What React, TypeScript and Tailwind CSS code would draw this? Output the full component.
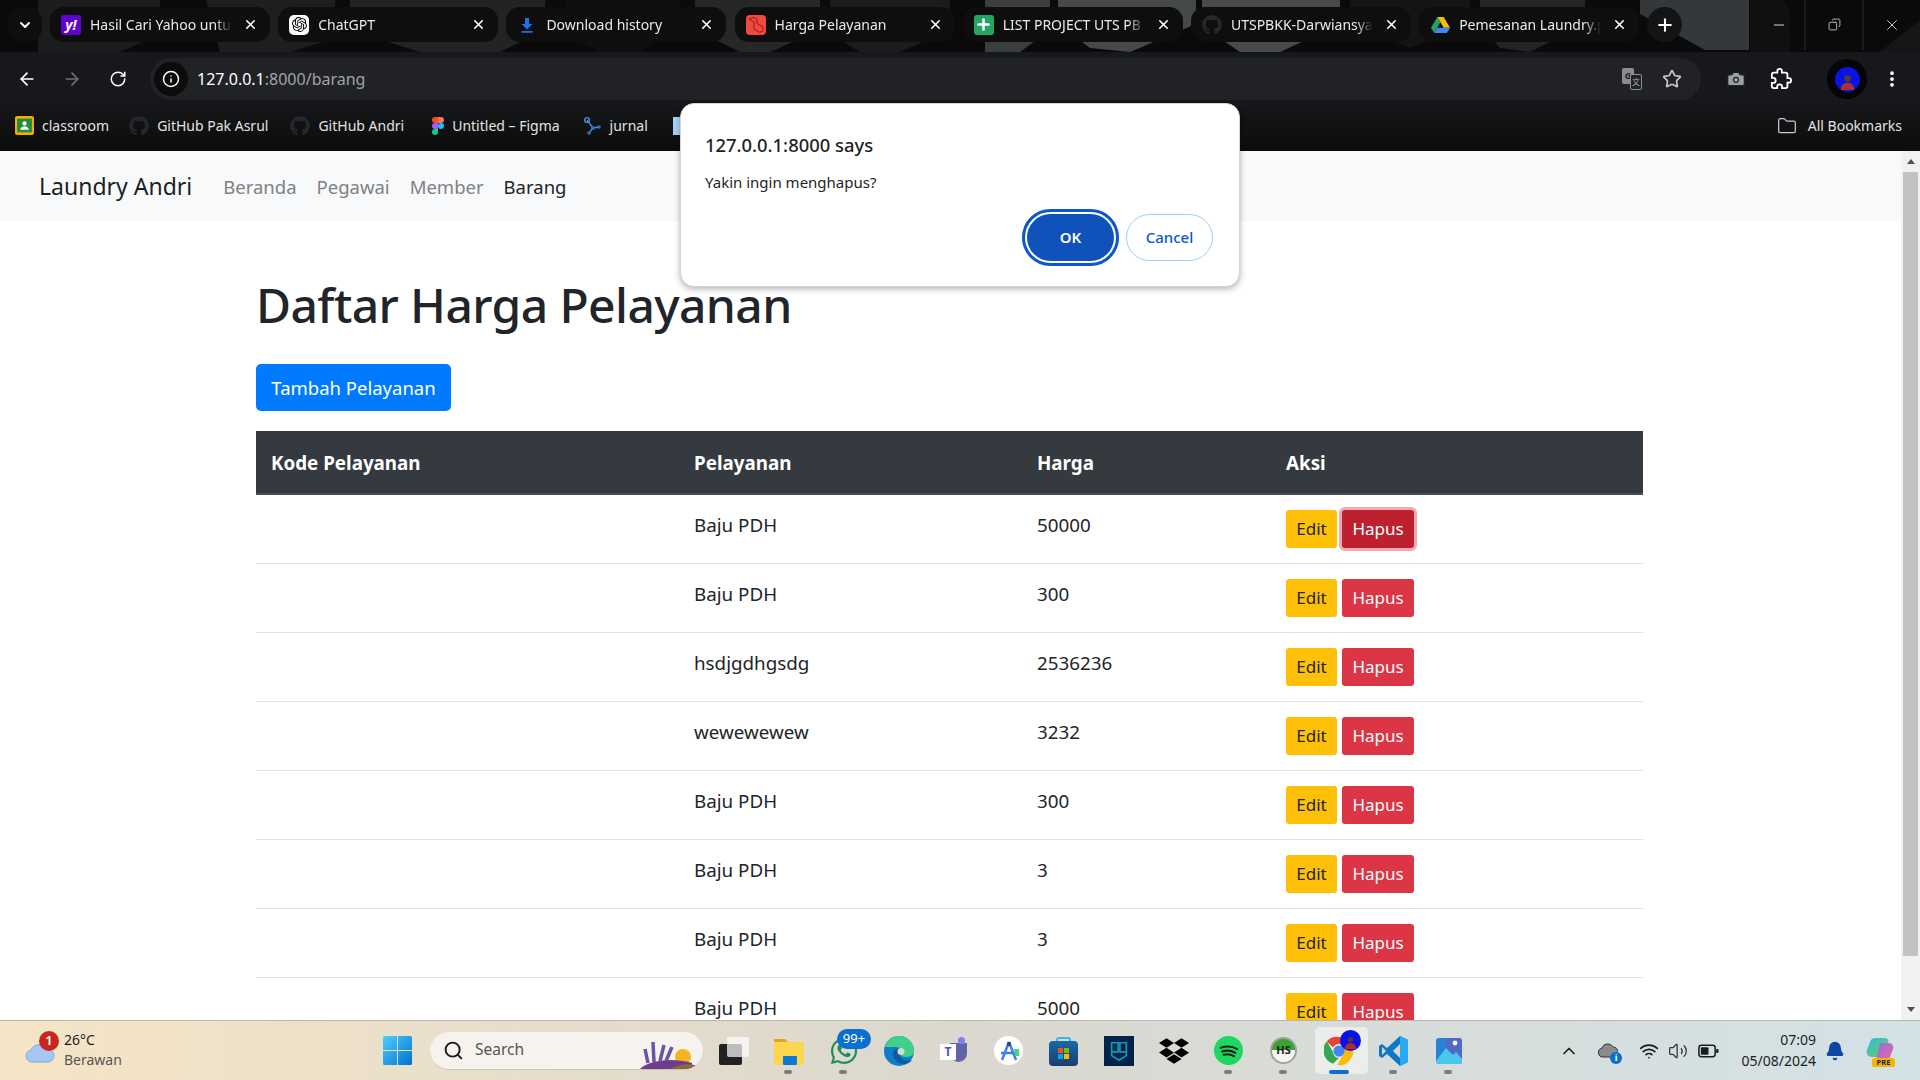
import type { ReactNode } from 'react';
import {
  ArrowLeft,
  ArrowRight,
  Bell,
  Camera,
  ChevronDown,
  ChevronUp,
  Copy,
  EllipsisVertical,
  Folder,
  Info,
  Minus,
  Plus,
  RotateCw,
  Search,
  Star,
  Volume2,
  Wifi,
  X,
} from 'lucide-react';
import { FaDropbox, FaGithub, FaWhatsapp } from 'react-icons/fa';
import { SiOpenai } from 'react-icons/si';

const rows = [
  { name: 'Baju PDH', price: '50000' },
  { name: 'Baju PDH', price: '300' },
  { name: 'hsdjgdhgsdg', price: '2536236' },
  { name: 'wewewewew', price: '3232' },
  { name: 'Baju PDH', price: '300' },
  { name: 'Baju PDH', price: '3' },
  { name: 'Baju PDH', price: '3' },
  { name: 'Baju PDH', price: '5000' },
];

function DriveIcon() {
  return (
    <svg viewBox="0 0 24 22" className="w-[19px] h-[18px]">
      <path d="M8 1h8l8 13.500h-8z" fill="#fbbc04" />
      <path d="M8 1L0 14.500 4 21l8-13.500z" fill="#1fa463" />
      <path d="M8 14.500h16L20 21H4z" fill="#4285f4" />
    </svg>
  );
}

function LaravelIcon() {
  return (
    <svg viewBox="0 0 20 20" className="w-5 h-5">
      <rect width="20" height="20" rx="4" fill="#f0493e" />
      <path d="M3 4l5 3v7l6 3.500 3-2V12l-6-3.500V4L8 2.500z" fill="none" stroke="#8e1f18" strokeWidth="1" />
    </svg>
  );
}

function ChromeLogo() {
  return (
    <svg viewBox="0 0 32 32" className="w-[30px] h-[30px]">
      <path d="M16 1a15 15 0 0 1 13 7.500H16a7.500 7.500 0 0 0-6.500 3.750L3 5.500A15 15 0 0 1 16 1z" fill="#ea4335" />
      <path d="M3 5.500l6.500 11.250A7.500 7.500 0 0 0 16 23.500L9.500 29.500A15 15 0 0 1 3 5.500z" fill="#34a853" />
      <path d="M29 8.500A15 15 0 0 1 14 31l6.500-11.250A7.500 7.500 0 0 0 16 8.500z" fill="#fbbc04" />
      <circle cx="16" cy="16" r="6" fill="#4285f4" />
    </svg>
  );
}

function Avatar({ size }: { size: string }) {
  return (
    <svg viewBox="0 0 24 24" className={size}>
      <circle cx="12" cy="12" r="12" fill="#0a12e6" />
      <circle cx="12" cy="11" r="3" fill="#5a3a2c" />
      <path d="M5.500 22c0-5 3-7 6.500-7s6.500 2 6.500 7z" fill="#a8312e" />
    </svg>
  );
}

function ExtensionIcon() {
  return (
    <svg viewBox="0 0 24 24" className="w-[22px] h-[22px] ml-[24px]">
      <path
        d="M20.500 11H19V7c0-1.100-.9-2-2-2h-4V3.500C13 2.120 11.880 1 10.500 1S8 2.120 8 3.500V5H4c-1.100 0-1.990.9-1.990 2v3.800H3.500c1.490 0 2.700 1.210 2.700 2.700s-1.210 2.700-2.700 2.700H2V20c0 1.100.9 2 2 2h3.800v-1.500c0-1.490 1.210-2.700 2.700-2.700 1.490 0 2.700 1.210 2.700 2.700V22H17c1.100 0 2-.9 2-2v-4h1.500c1.380 0 2.500-1.120 2.500-2.500S21.880 11 20.500 11z"
        fill="none"
        stroke="#fff"
        strokeWidth="2"
      />
    </svg>
  );
}

function Tab({ icon, title }: { icon: ReactNode; title: string }) {
  return (
    <div className="w-[220px] h-[35px] shrink-0 rounded-[14px] bg-[#0e0e0f] flex items-center text-[14px] text-[#e8eaed]">
      <div className="w-5 h-5 flex items-center justify-center shrink-0 ml-[11px]">{icon}</div>
      <div className="ml-[9px] w-[142px] overflow-hidden whitespace-nowrap [mask-image:linear-gradient(to_right,black_88%,transparent)]">
        {title}
      </div>
      <X size={15} strokeWidth={2.500} className="ml-[11px] text-white shrink-0" />
    </div>
  );
}

function TabBackdrop() {
  return (
    <svg viewBox="0 0 1920 52" className="absolute inset-0 w-[1920px] h-[52px]">
      <rect width="1920" height="52" fill="#0a0a0a" />
      <polygon points="38,-4 160,-4 160,34 120,52 38,52" fill="#1b1c1c" />
      <polygon points="205,-4 335,-4 335,38 290,52 220,52" fill="#1d1e1e" />
      <polygon points="350,-4 545,-4 545,30 500,52 420,52 350,30" fill="#222323" />
      <polygon points="565,-4 680,-4 680,28 640,52 600,52 565,34" fill="#0f0f0f" />
      <polygon points="695,-4 820,-4 820,30 770,52 740,52 695,30" fill="#262828" />
      <polygon points="830,-4 950,-4 950,30 900,52 860,52 830,34" fill="#1a1b1b" />
      <polygon points="985,-4 1050,-4 1050,30 1020,52 985,52" fill="#3b3e3e" />
      <polygon points="1058,-4 1196,-4 1196,24 1130,52 1090,48 1058,24" fill="#46494a" />
      <polygon points="1202,-4 1340,-4 1340,24 1280,52 1240,52 1202,26" fill="#484b4c" />
      <polygon points="1350,-4 1470,-4 1470,24 1410,48 1350,24" fill="#141414" />
      <polygon points="1480,-4 1585,-4 1585,24 1530,52 1500,48 1480,24" fill="#232525" />
      <polygon points="1640,-4 1749,-4 1749,50 1705,50 1640,14" fill="#35383a" />
      <polygon points="1750,-4 1782,-4 1790,12 1790,52 1750,52" fill="#101010" />
      <polygon points="1880,52 1920,20 1920,52" fill="#161616" />
      <path d="M1805 0v50M1863 0v50" stroke="#2a2a2a" />
    </svg>
  );
}

function ChromeTop() {
  return (
    <div className="relative h-[52px] shrink-0 flex items-start pt-[7px]">
      <TabBackdrop />
      <div className="relative flex items-center w-full">
        <div className="ml-[8px] w-[34px] h-[35px] rounded-[14px] bg-[#0e0e0f] flex items-center justify-center">
          <ChevronDown size={16} strokeWidth={3} className="text-white" />
        </div>
        <div className="ml-[8px] flex gap-[8.200px]">
          <Tab
            title="Hasil Cari Yahoo untu"
            icon={<div className="w-5 h-5 rounded-[3px] bg-[#5f01d1] text-white text-[14px] font-bold italic leading-5 text-center">y!</div>}
          />
          <Tab
            title="ChatGPT"
            icon={
              <div className="w-5 h-5 rounded-[5px] bg-white flex items-center justify-center">
                <SiOpenai size={15} className="text-black" />
              </div>
            }
          />
          <Tab
            title="Download history"
            icon={
              <svg viewBox="0 0 16 16" className="w-4 h-4">
                <path d="M6 1h4v6h3.500L8 12.500 2.500 7H6z" fill="#1a73e8" />
                <rect x="2.500" y="14" width="11" height="1.800" fill="#1a73e8" />
              </svg>
            }
          />
          <Tab title="Harga Pelayanan" icon={<LaravelIcon />} />
          <Tab
            title="LIST PROJECT UTS PB"
            icon={
              <div className="w-5 h-5 rounded-[3px] bg-[#23a566] flex items-center justify-center">
                <Plus size={17} strokeWidth={3.500} className="text-white" />
              </div>
            }
          />
          <Tab title="UTSPBKK-Darwiansya" icon={<FaGithub size={20} className="text-[#26282b]" />} />
          <Tab title="Pemesanan Laundry.p" icon={<DriveIcon />} />
        </div>
        <div className="ml-[8px] w-[35px] h-[35px] rounded-full bg-[#141415] flex items-center justify-center">
          <Plus size={20} strokeWidth={2.500} className="text-white" />
        </div>
        <div className="ml-[89px] flex items-center text-[#d8d8d8]">
          <Minus size={16} strokeWidth={1.500} />
          <Copy size={13} strokeWidth={1.500} className="ml-[41px] -scale-x-100" />
          <X size={18} strokeWidth={1.200} className="ml-[42px]" />
        </div>
      </div>
    </div>
  );
}

function Toolbar() {
  return (
    <div className="h-[48px] pt-[6px] shrink-0 bg-[#17181b] flex items-center">
      <ArrowLeft size={20} strokeWidth={2} className="ml-[17px] text-white" />
      <ArrowRight size={20} strokeWidth={2} className="ml-[25px] text-[#6f7073]" />
      <RotateCw size={18} strokeWidth={2} className="ml-[27px] text-white" />
      <div className="ml-[23px] w-[1551px] h-[42px] rounded-full bg-[#202226] flex items-center">
        <div className="ml-[4px] w-[34px] h-[34px] rounded-full bg-[#0c0c0d] flex items-center justify-center">
          <Info size={18} strokeWidth={2} className="text-white" />
        </div>
        <div className="ml-[9px] text-[16px] text-white">
          127.0.0.1<span className="text-[#a0a2a6]">:8000/barang</span>
        </div>
        <div className="ml-auto flex items-center">
          <div className="relative w-5 h-6">
            <div className="absolute left-0 top-[1px] w-3 h-4 bg-[#8a8c90] rounded-[2px] text-[9px] leading-4 text-center font-bold text-[#202226]">G</div>
            <div className="absolute right-0 bottom-[1px] w-3 h-4 border border-[#8a8c90] rounded-[2px] text-[8px] leading-[14px] text-center text-[#a8aaae] bg-[#202226] font-['Noto_Sans_CJK_SC',sans-serif]">文</div>
          </div>
          <Star size={20} strokeWidth={2} className="ml-[20px] mr-[19px] text-[#c7c9cc]" />
        </div>
      </div>
      <Camera size={20} fill="#9aa0a6" strokeWidth={1.500} className="ml-[25px] text-[#202226]" />
      <ExtensionIcon />
      <div className="ml-[35px] w-[40px] h-[40px] rounded-full bg-[#050505] flex items-center justify-center">
        <Avatar size="w-[25px] h-[25px]" />
      </div>
      <EllipsisVertical size={20} strokeWidth={2.500} className="ml-[15px] text-white" />
    </div>
  );
}

function Bookmark({ icon, label, className }: { icon: ReactNode; label: string; className: string }) {
  return (
    <div className={`flex items-center whitespace-nowrap ${className}`}>
      {icon}
      <span className="ml-[8px]">{label}</span>
    </div>
  );
}

function Bookmarks() {
  return (
    <div className="h-[51px] shrink-0 bg-gradient-to-b from-[#17181b] to-[#0c0c0c] flex items-center text-[14px] text-[#e3e3e3]">
      <Bookmark
        className="ml-[15px]"
        label="classroom"
        icon={
          <svg viewBox="0 0 18 18" className="w-[19px] h-[19px]">
            <rect width="18" height="18" rx="2" fill="#f9ab00" />
            <rect x="2" y="2.500" width="14" height="13" fill="#1e8e3e" />
            <circle cx="9" cy="7" r="2" fill="#fff" />
            <path d="M5 13c0-2 2-3.200 4-3.200s4 1.200 4 3.200z" fill="#fff" />
          </svg>
        }
      />
      <Bookmark className="ml-[20px]" label="GitHub Pak Asrul" icon={<FaGithub size={20} className="text-[#26282b]" />} />
      <Bookmark className="ml-[22px]" label="GitHub Andri" icon={<FaGithub size={20} className="text-[#26282b]" />} />
      <Bookmark
        className="ml-[28px]"
        label="Untitled – Figma"
        icon={
          <svg viewBox="0 0 12 18" className="w-[12px] h-[18px]">
            <path d="M3 0h3v6H3a3 3 0 0 1 0-6z" fill="#f24e1e" />
            <path d="M6 0h3a3 3 0 0 1 0 6H6z" fill="#ff7262" />
            <path d="M3 6h3v6H3a3 3 0 0 1 0-6z" fill="#a259ff" />
            <circle cx="9" cy="9" r="3" fill="#1abcfe" />
            <path d="M3 12h3v3a3 3 0 1 1-3-3z" fill="#0acf83" />
          </svg>
        }
      />
      <Bookmark
        className="ml-[22px]"
        label="jurnal"
        icon={
          <svg viewBox="0 0 20 20" className="w-5 h-5">
            <path d="M5 4l6 8 6-1M11 12l-4 5" stroke="#4a90e2" strokeWidth="1.300" fill="none" />
            <circle cx="5" cy="4" r="2.400" fill="none" stroke="#4a90e2" strokeWidth="1.400" />
            <circle cx="11" cy="12" r="2" fill="#2d6fc0" />
            <circle cx="17" cy="11" r="1.800" fill="#2d6fc0" />
            <circle cx="7" cy="17" r="1.800" fill="#2d6fc0" />
          </svg>
        }
      />
      <div className="ml-[25px] w-[12px] h-[18px] bg-[#a6d2f2]" />
      <div className="ml-auto mr-[18px] flex items-center">
        <Folder size={20} strokeWidth={1.500} className="text-[#c7c9cc]" />
        <span className="ml-[11px]">All Bookmarks</span>
      </div>
    </div>
  );
}

function Dialog() {
  return (
    <div className="absolute left-[680px] top-[103px] w-[560px] h-[184px] rounded-[14px] bg-white border border-[#d4d4d4] shadow-[0_2px_6px_rgba(0,0,0,0.3)] pl-[24px] pr-[26px] pt-[28px] text-[#1f1f1f] z-10">
      <div className="text-[18.400px] font-medium leading-[26px]">127.0.0.1:8000 says</div>
      <div className="mt-[13px] text-[15px] leading-[22px]">Yakin ingin menghapus?</div>
      <div className="mt-[16px] flex justify-end items-center gap-[7px]">
        <div className="w-[97px] h-[57px] rounded-full border-[3px] border-[#0b57d0] p-[2px]">
          <div className="w-full h-full rounded-full bg-[#0f52ba] text-white text-[15px] font-semibold flex items-center justify-center">OK</div>
        </div>
        <div className="w-[87px] h-[47px] rounded-full border border-[#a8c7fa] text-[#0b57d0] text-[15px] font-medium flex items-center justify-center">Cancel</div>
      </div>
    </div>
  );
}

function Navbar() {
  return (
    <div className="h-[70px] shrink-0 bg-[#f8f9fa] flex items-center pt-[1px]">
      <div className="ml-[39px] text-[23px] text-[#1c1f23]">Laundry Andri</div>
      <div className="ml-[31px] flex gap-[20px] text-[18.500px] text-[#7f8184]">
        <span>Beranda</span>
        <span>Pegawai</span>
        <span>Member</span>
        <span className="text-[#212529]">Barang</span>
      </div>
    </div>
  );
}

function PriceTable() {
  return (
    <table className="w-[1387px] table-fixed border-collapse text-[18.800px] text-[#212529]">
      <colgroup>
        <col className="w-[423px]" />
        <col className="w-[343px]" />
        <col className="w-[249px]" />
        <col />
      </colgroup>
      <thead>
        <tr className="h-[63px] bg-[#343a40] border-b-2 border-[#454d55] text-white">
          <th className="px-[15px] pt-[2px] text-left font-bold">Kode Pelayanan</th>
          <th className="px-[15px] pt-[2px] text-left font-bold">Pelayanan</th>
          <th className="px-[15px] pt-[2px] text-left font-bold">Harga</th>
          <th className="px-[15px] pt-[2px] text-left font-bold">Aksi</th>
        </tr>
      </thead>
      <tbody>
        {rows.map((row, i) => (
          <tr key={i} className="border-b border-[#dee2e6]">
            <td className="p-[15px] align-top leading-[30px]"></td>
            <td className="px-[15px] pt-[15px] pb-[23px] align-top leading-[30px]">{row.name}</td>
            <td className="px-[15px] pt-[15px] pb-[23px] align-top leading-[30px]">{row.price}</td>
            <td className="p-[15px] align-top">
              <div className="flex gap-[5px] text-[17px]">
                <div className="w-[51px] h-[38px] rounded-[3px] bg-[#ffc107] text-[#212529] flex items-center justify-center">Edit</div>
                {i === 0 ? (
                  <div className="w-[72px] h-[38px] rounded-[3px] bg-[#bd2130] text-white flex items-center justify-center ring-[3px] ring-[#f1a9b0]">Hapus</div>
                ) : (
                  <div className="w-[72px] h-[38px] rounded-[3px] bg-[#dc3545] text-white flex items-center justify-center">Hapus</div>
                )}
              </div>
            </td>
          </tr>
        ))}
      </tbody>
    </table>
  );
}

function Page() {
  return (
    <div className="flex-1 min-h-0 flex bg-white">
      <div className="flex-1 min-w-0 overflow-hidden">
        <Navbar />
        <div className="pl-[256px]">
          <h1 className="mt-[54px] text-[48px] leading-[60px] tracking-[-0.6px] font-medium text-[#212529]">Daftar Harga Pelayanan</h1>
          <div className="mt-[29px] w-[195px] h-[47px] rounded-[5px] bg-[#007bff] text-white text-[18.500px] flex items-center justify-center">Tambah Pelayanan</div>
          <div className="mt-[20px]">
            <PriceTable />
          </div>
        </div>
      </div>
      <div className="w-[19px] shrink-0 bg-[#f1f1f1] flex flex-col items-center">
        <div className="h-[21px] flex items-center">
          <div className="w-0 h-0 border-x-[4px] border-x-transparent border-b-[5px] border-b-[#505050]" />
        </div>
        <div className="w-[15px] h-[784px] bg-[#c1c1c1]" />
        <div className="mt-auto h-[21px] flex items-center">
          <div className="w-0 h-0 border-x-[4px] border-x-transparent border-t-[5px] border-t-[#505050]" />
        </div>
      </div>
    </div>
  );
}

function TaskIcon({ children, dot, className = '' }: { children: ReactNode; dot?: boolean; className?: string }) {
  return (
    <div className={`relative w-[55px] h-[59px] shrink-0 flex items-center justify-center ${className}`}>
      {children}
      {dot && <div className="absolute bottom-[6px] left-[23px] w-[8px] h-[4px] rounded-full bg-[#7c7c7c]" />}
    </div>
  );
}

function WindowsLogo() {
  return (
    <svg viewBox="0 0 29 29" className="w-[29px] h-[29px]">
      <defs>
        <linearGradient id="win" x1="0" y1="0" x2="1" y2="1">
          <stop offset="0" stopColor="#4fd0fb" />
          <stop offset="1" stopColor="#0070cf" />
        </linearGradient>
      </defs>
      <path d="M1.500 0H14v14H0V1.500A1.500 1.500 0 0 1 1.500 0zM15 0h12.500A1.500 1.500 0 0 1 29 1.500V14H15zM0 15h14v14H1.500A1.500 1.500 0 0 1 0 27.500zM15 15h14v12.500a1.500 1.500 0 0 1-1.500 1.500H15z" fill="url(#win)" />
    </svg>
  );
}

function CopilotIcon() {
  return (
    <svg viewBox="0 0 28 24" className="w-[28px] h-[24px]">
      <defs>
        <linearGradient id="cpA" x1="0" y1="0" x2="1" y2="1">
          <stop offset="0" stopColor="#2fb6e8" />
          <stop offset="1" stopColor="#74d24a" />
        </linearGradient>
        <linearGradient id="cpB" x1="0" y1="0" x2="1" y2="1">
          <stop offset="0" stopColor="#8a6ee8" />
          <stop offset="1" stopColor="#f2689c" />
        </linearGradient>
      </defs>
      <path d="M9 1h10c2 0 3 1 3.500 3L17 20H6c-4 0-6-3-5-7L4.500 4C5.300 2 7 1 9 1z" fill="url(#cpA)" />
      <path d="M14 6h9c3 0 5 3 4 6l-3 8c-.8 2-2.500 3-4.500 3H10z" fill="url(#cpB)" />
    </svg>
  );
}

function Taskbar() {
  return (
    <div className="h-[60px] shrink-0 border-t border-[#b9b5ac] bg-gradient-to-r from-[#f6e5c6] via-[#dbd8cf] to-[#d3e2e6] flex items-center relative">
      <div className="relative ml-[25px] w-[30px] h-[24px] mt-[8px] shrink-0">
        <svg viewBox="0 0 30 20" className="w-[30px] h-[20px]">
          <path d="M7 19a6 6 0 0 1-1-11.900A9 9 0 0 1 22 6a6.500 6.500 0 0 1 1 13z" fill="#a7c6f2" stroke="#7fa8e4" />
        </svg>
        <div className="absolute -top-[12px] left-[14px] w-[20px] h-[20px] rounded-full bg-[#c8261f] text-white text-[13px] font-semibold flex items-center justify-center">1</div>
      </div>
      <div className="ml-[9px] w-[60px] shrink-0 text-[14px] leading-[20px] text-[#1d1d1d] pb-[2px]">
        <div>26°C</div>
        <div className="text-[#555]">Berawan</div>
      </div>

      <div className="ml-[259px] shrink-0">
        <WindowsLogo />
      </div>
      <div className="ml-[18px] w-[273px] h-[38px] shrink-0 rounded-full bg-[#f6f3ee] border-b border-[#c8c4bc] flex items-center relative overflow-hidden">
        <Search size={21} strokeWidth={2.200} className="ml-[13px] text-[#1c1c1c]" />
        <span className="ml-[11px] text-[15.500px] text-[#555]">Search</span>
        <svg viewBox="0 0 55 32" className="absolute right-[8px] bottom-0 w-[55px] h-[32px]">
          <circle cx="43" cy="20" r="8" fill="#f3b61f" />
          <path d="M0 32c8-8 30-12 52-6v6z" fill="#6b3d8a" />
          <path d="M30 32c8-4 16-6 25-4v4z" fill="#8a6a3c" />
          <path d="M8 26l-3-14M14 25l-1-20M20 24l4-16M26 24l6-14" stroke="#6b52a8" strokeWidth="3.500" />
        </svg>
      </div>

      <TaskIcon className="ml-[3px]">
        <div className="relative w-[30px] h-[28px]">
          <div className="absolute left-0 bottom-0 w-[23px] h-[21px] rounded-[2px] bg-[#222]" />
          <div className="absolute right-0 top-0 w-[22px] h-[20px] rounded-[2px] bg-white/70" />
        </div>
      </TaskIcon>
      <TaskIcon dot>
        <svg viewBox="0 0 30 28" className="w-[30px] h-[28px]">
          <path d="M0 2h11l3 3h16v23H0z" fill="#e2a51d" />
          <rect y="5" width="30" height="23" fill="#fdd64f" />
          <rect x="9" y="19" width="14" height="9" rx="1" fill="#0f78d4" />
        </svg>
      </TaskIcon>
      <TaskIcon dot>
        <FaWhatsapp size={30} className="text-[#1c8f59]" />
        <div className="absolute top-[8px] left-[21px] w-[34px] h-[20px] rounded-full bg-[#0a6fd0] text-white text-[13px] flex items-center justify-center">99+</div>
      </TaskIcon>
      <TaskIcon>
        <svg viewBox="0 0 30 30" className="w-[30px] h-[30px]">
          <circle cx="15" cy="15" r="15" fill="#0e7ecb" />
          <path d="M1 11C4 3 10 0 15 0c8 0 15 6 15 16 0 3-4 5-8 5-5 0-6-3-6-5 2-1 1-5-4-5-5 0-12 0-11 0z" fill="#3fd08c" />
          <path d="M13 13c-5 0-6 9 2 14 5 2 10 1 13-3-8 3-14-3-12-8 0-2-1-3-3-3z" fill="#0a5c9e" />
          <circle cx="17" cy="15.500" r="3.500" fill="#dbd8cf" />
        </svg>
      </TaskIcon>
      <TaskIcon>
        <div className="relative w-[27px] h-[27px]">
          <div className="absolute right-0 top-[6px] w-[17px] h-[19px] rounded-b-full bg-[#6264a7]" />
          <div className="absolute right-[2px] top-0 w-[7px] h-[7px] rounded-full bg-[#7b83eb]" />
          <div className="absolute left-0 top-[7px] w-[16px] h-[16px] bg-white text-[#4b53bc] text-[12px] font-bold leading-4 text-center">T</div>
        </div>
      </TaskIcon>
      <TaskIcon>
        <div className="w-[29px] h-[29px] rounded-full bg-white flex items-center justify-center">
          <svg viewBox="0 0 24 24" className="w-[24px] h-[24px]">
            <path d="M12 3L5 21M12 3l7 18M4 14h16" stroke="#3f7ff0" strokeWidth="2.500" fill="none" />
            <circle cx="12" cy="5" r="2.200" fill="#2f4d7a" />
            <path d="M17 10h5v7h-4z" fill="#3ddc84" />
          </svg>
        </div>
      </TaskIcon>
      <TaskIcon>
        <div className="relative w-[29px] h-[29px] mt-[1px]">
          <div className="absolute left-[7px] top-0 w-[15px] h-[9px] rounded-t-[3px] border-2 border-b-0 border-[#3ab4f2]" />
          <div className="absolute left-0 top-[4px] w-[29px] h-[25px] rounded-[4px] bg-gradient-to-b from-[#1569a8] to-[#1c3d6e] grid grid-cols-2 gap-[1px] px-[9px] py-[7px]">
            <div className="bg-[#f25022]" />
            <div className="bg-[#7fba00]" />
            <div className="bg-[#00a4ef]" />
            <div className="bg-[#ffb900]" />
          </div>
        </div>
      </TaskIcon>
      <TaskIcon>
        <div className="w-[30px] h-[30px] bg-[#04234a] flex items-center justify-center">
          <svg viewBox="0 0 24 24" className="w-[22px] h-[22px]">
            <path d="M4 3h7v10H4zM13 3h7v10h-7zM4 13v4l8 5 8-5v-4" fill="none" stroke="#0e9bb8" strokeWidth="1.800" />
          </svg>
        </div>
      </TaskIcon>
      <TaskIcon>
        <FaDropbox size={30} className="text-black" />
      </TaskIcon>
      <TaskIcon dot>
        <div className="w-[29px] h-[29px] rounded-full bg-[#1ed760] flex items-center justify-center">
          <svg viewBox="0 0 24 24" className="w-[22px] h-[22px]">
            <path d="M3 8.500c6-2 13-1.500 18 1.500M4.500 12.500c5-1.500 10-1 14.500 1.500M6 16c4-1 8-.5 11.500 1.500" stroke="#14261a" strokeWidth="2.300" strokeLinecap="round" fill="none" />
          </svg>
        </div>
      </TaskIcon>
      <TaskIcon dot>
        <div className="w-[27px] h-[27px] rounded-full border-[2px] border-[#9ea49a] bg-gradient-to-b from-[#3ba32f] from-50% to-[#f4f4f0] to-50% flex items-center justify-center text-[11px] font-bold text-[#1a1a1a]">HS</div>
      </TaskIcon>
      <TaskIcon>
        <div className="absolute left-[4px] right-[-2px] top-[6px] bottom-[6px] rounded-[5px] bg-white/50" />
        <div className="relative">
          <ChromeLogo />
          <div className="absolute -top-[6px] -right-[7px]">
            <Avatar size="w-[21px] h-[21px]" />
          </div>
        </div>
        <div className="absolute bottom-[6px] left-[18px] w-[20px] h-[4px] rounded-full bg-[#0a6fd0]" />
      </TaskIcon>
      <TaskIcon dot>
        <svg viewBox="0 0 30 30" className="w-[30px] h-[30px]">
          <path d="M21 0l8 4v22l-8 4L8 18l-5 4-3-2v-10l3-2 5 4z" fill="#0e78c8" />
          <path d="M21 0l8 4v22l-8 4z" fill="#29a9ee" />
          <path d="M21 8l-7 7 7 7z" fill="#dbd8cf" />
          <path d="M3 11l4 4-4 4z" fill="#dbd8cf" />
        </svg>
      </TaskIcon>
      <TaskIcon dot>
        <svg viewBox="0 0 26 26" className="w-[26px] h-[26px]">
          <rect width="26" height="26" rx="3" fill="#2b7fd6" />
          <rect x="10" width="16" height="26" rx="3" fill="#6a5cbd" opacity="0.6" />
          <path d="M0 23l10-13 7 7 3-3 6 7v2a3 3 0 0 1-3 3H3a3 3 0 0 1-3-3z" fill="#4bc7ee" />
          <circle cx="19" cy="5" r="2.400" fill="#fff" />
        </svg>
      </TaskIcon>

      <ChevronUp size={20} strokeWidth={2} className="ml-[83px] shrink-0 text-[#1c1c1c]" />
      <div className="relative ml-[19px] w-[20px] h-[18px] shrink-0">
        <svg viewBox="0 0 20 16" className="w-[20px] h-[16px]">
          <path d="M5 15a4.500 4.500 0 0 1-1-8.900A6 6 0 0 1 15 5a5 5 0 0 1 0 10z" fill="#8b8b8b" stroke="#333" />
        </svg>
        <div className="absolute -right-[4px] -bottom-[4px] w-[12px] h-[12px] rounded-full bg-[#0a6fd0] text-white text-[9px] font-bold leading-3 text-center">i</div>
      </div>
      <Wifi size={20} strokeWidth={2} className="ml-[21px] shrink-0 text-[#1c1c1c]" />
      <Volume2 size={20} strokeWidth={1.500} className="ml-[9px] shrink-0 text-[#333]" />
      <svg viewBox="0 0 22 14" className="ml-[10px] w-[21px] h-[14px] shrink-0">
        <rect x="1" y="1" width="17" height="12" rx="2.500" fill="none" stroke="#1c1c1c" strokeWidth="1.600" />
        <rect x="3" y="3" width="8" height="8" rx="1" fill="#1c1c1c" />
        <rect x="19" y="5" width="2.500" height="4" rx="1" fill="#1c1c1c" />
      </svg>
      <div className="ml-auto text-right text-[14px] leading-[21px] text-[#1d1d1d] pb-[2px]">
        <div>07:09</div>
        <div>05/08/2024</div>
      </div>
      <Bell size={20} fill="#0d47a1" strokeWidth={2} className="ml-[9px] shrink-0 text-[#0d47a1]" />
      <div className="relative ml-[21px] mr-[26px] w-[28px] h-[24px] shrink-0 -mt-[4px]">
        <CopilotIcon />
        <div className="absolute -bottom-[6px] left-[6px] w-[23px] h-[9px] rounded-[2px] bg-[#f7b500] text-[7.500px] font-bold leading-[9px] text-center text-[#222]">PRE</div>
      </div>
    </div>
  );
}

export default function App() {
  return (
    <div className="relative w-[1920px] h-[1080px] overflow-hidden flex flex-col font-['Noto_Sans',sans-serif]">
      <ChromeTop />
      <Toolbar />
      <Bookmarks />
      <Page />
      <Taskbar />
      <Dialog />
    </div>
  );
}
